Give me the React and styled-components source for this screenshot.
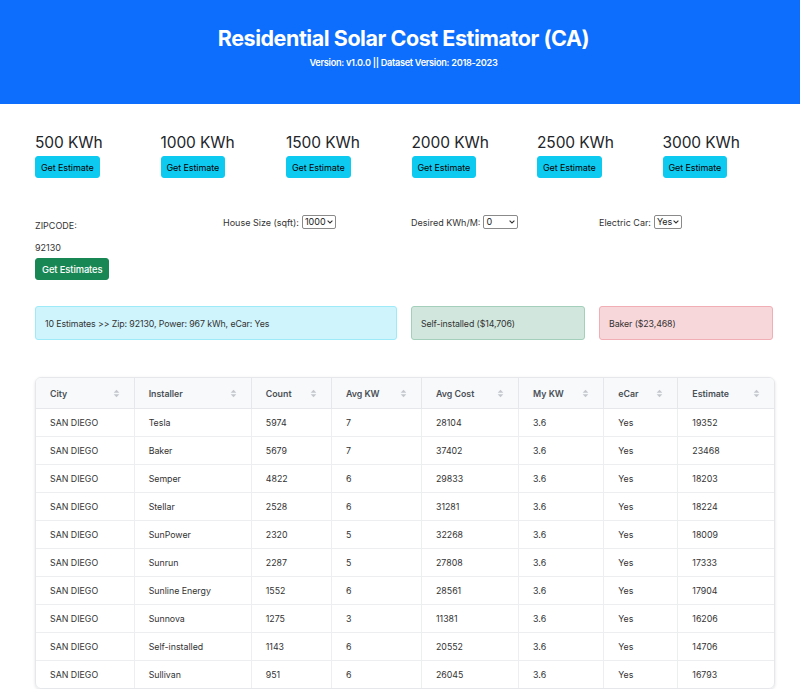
import React from 'react';
import styled, { createGlobalStyle } from 'styled-components';

const kwhOptions = [500, 1000, 1500, 2000, 2500, 3000];

const columns = [
    { key: 'city', label: 'City', width: 98 },
    { key: 'installer', label: 'Installer', width: 117 },
    { key: 'count', label: 'Count', width: 80 },
    { key: 'avgKw', label: 'Avg KW', width: 90 },
    { key: 'avgCost', label: 'Avg Cost', width: 97 },
    { key: 'myKw', label: 'My KW', width: 85 },
    { key: 'ecar', label: 'eCar', width: 74 },
    { key: 'estimate', label: 'Estimate', width: 96 },
];

const rows = [
    ['Tesla', 5974, 7, 28104, 19352],
    ['Baker', 5679, 7, 37402, 23468],
    ['Semper', 4822, 6, 29833, 18203],
    ['Stellar', 2528, 6, 31281, 18224],
    ['SunPower', 2320, 5, 32268, 18009],
    ['Sunrun', 2287, 5, 27808, 17333],
    ['Sunline Energy', 1552, 6, 28561, 17904],
    ['Sunnova', 1275, 3, 11381, 16206],
    ['Self-installed', 1143, 6, 20552, 14706],
    ['Sullivan', 951, 6, 26045, 16793],
].map(([installer, count, avgKw, avgCost, estimate]) => ({
    city: 'SAN DIEGO',
    installer,
    count,
    avgKw,
    avgCost,
    myKw: '3.6',
    ecar: 'Yes',
    estimate,
}));

const SortIcon = () => (
    <svg width="7" height="9" viewBox="0 0 7 9">
        <path d="M3.5 0.8 L6.3 3.8 H0.7 Z" fill="#c3c7cc" />
        <path d="M3.5 8.2 L6.3 5.2 H0.7 Z" fill="#c3c7cc" />
    </svg>
);

const Chevron = () => (
    <svg width="6" height="4" viewBox="0 0 6 4">
        <path d="M0.6 0.6 L3 3 L5.4 0.6" fill="none" stroke="#333" strokeWidth="1.1" />
    </svg>
);

function Dropdown({ value, width }) {
    return (
        <SelectWrap style={{ width }}>
            <Select defaultValue={value}>
                <option>{value}</option>
            </Select>
            <ChevronSpot>
                <Chevron />
            </ChevronSpot>
        </SelectWrap>
    );
}

export default function App() {
    return (
        <>
            <GlobalStyle />
            <Header>
                <Title>Residential Solar Cost Estimator (CA)</Title>
                <Subtitle>Version: v1.0.0 || Dataset Version: 2018-2023</Subtitle>
            </Header>
            <Main>
                <PresetRow>
                    {kwhOptions.map((kwh) => (
                        <Preset key={kwh}>
                            <PresetTitle>{kwh} KWh</PresetTitle>
                            <Button variant="info">Get Estimate</Button>
                        </Preset>
                    ))}
                </PresetRow>

                <FormRow>
                    <Field>
                        <ZipLabel>ZIPCODE:</ZipLabel>
                        <ZipValue>92130</ZipValue>
                        <Button variant="success">Get Estimates</Button>
                    </Field>
                    <Field>
                        <InlineLabel>
                            House Size (sqft):
                            <Dropdown value="1000" width={34} />
                        </InlineLabel>
                    </Field>
                    <Field>
                        <InlineLabel>
                            Desired KWh/M:
                            <Dropdown value="0" width={35} />
                        </InlineLabel>
                    </Field>
                    <Field>
                        <InlineLabel>
                            Electric Car:
                            <Dropdown value="Yes" width={28} />
                        </InlineLabel>
                    </Field>
                </FormRow>

                <AlertRow>
                    <Alert variant="info">10 Estimates &gt;&gt; Zip: 92130, Power: 967 kWh, eCar: Yes</Alert>
                    <Alert variant="success">Self-installed ($14,706)</Alert>
                    <Alert variant="danger">Baker ($23,468)</Alert>
                </AlertRow>

                <TableCard>
                    <Table>
                        <colgroup>
                            {columns.map((c) => (
                                <col key={c.key} style={{ width: c.width }} />
                            ))}
                        </colgroup>
                        <thead>
                            <tr>
                                {columns.map((c) => (
                                    <Th key={c.key}>
                                        <ThInner>
                                            {c.label}
                                            <SortIcon />
                                        </ThInner>
                                    </Th>
                                ))}
                            </tr>
                        </thead>
                        <tbody>
                            {rows.map((row, i) => (
                                <tr key={i}>
                                    {columns.map((c) => (
                                        <Td key={c.key}>{row[c.key]}</Td>
                                    ))}
                                </tr>
                            ))}
                        </tbody>
                    </Table>
                </TableCard>
            </Main>
        </>
    );
}

const GlobalStyle = createGlobalStyle`
    body {
        margin: 0;
        font-family: Inter, "Noto Sans", "Liberation Sans", sans-serif;
        color: #212529;
        background: #fff;
    }
`;

const Header = styled.header`
    background-color: #0d6efd;
    color: white;
    height: 104px;
    text-align: center;
    padding: 25px 0 0 7px;
    box-sizing: border-box;
`;

const Title = styled.h1`
    margin: 0;
    font-size: 21.5px;
    font-weight: 700;
    letter-spacing: -0.45px;
    line-height: 26px;
`;

const Subtitle = styled.div`
    margin-top: 6px;
    font-size: 9.2px;
    font-weight: 600;
    letter-spacing: -0.3px;
`;

const Main = styled.main`
    padding: 28px 27px 0 35px;
`;

const PresetRow = styled.div`
    display: grid;
    grid-template-columns: repeat(6, 125.5px);
`;

const Preset = styled.div`
    display: flex;
    flex-direction: column;
    align-items: flex-start;
`;

const PresetTitle = styled.div`
    font-size: 15.5px;
    line-height: 20px;
    margin-top: 1px;
    margin-bottom: 3px;
    letter-spacing: -0.1px;
`;

const Button = styled.button`
    font-family: inherit;
    font-size: ${(props) => (props.variant === 'success' ? '9.4px' : '9px')};
    height: 22px;
    padding: 0 ${(props) => (props.variant === 'success' ? '6px' : '5px')};
    border-radius: 3px;
    cursor: pointer;
    letter-spacing: -0.1px;
    border: 1px solid ${(props) => (props.variant === 'success' ? '#198754' : '#0dcaf0')};
    background-color: ${(props) => (props.variant === 'success' ? '#198754' : '#0dcaf0')};
    color: ${(props) => (props.variant === 'success' ? 'white' : '#000')};
    font-weight: ${(props) => (props.variant === 'success' ? 500 : 400)};
`;

const FormRow = styled.div`
    display: grid;
    grid-template-columns: repeat(4, 188px);
    margin-top: 37px;
    font-size: 9px;
    color: #333;
`;

const Field = styled.div`
    display: flex;
    flex-direction: column;
    align-items: flex-start;
`;

const ZipLabel = styled.div`
    margin-top: 5px;
    line-height: 12px;
`;

const ZipValue = styled.div`
    margin-top: 10px;
    line-height: 12px;
    margin-bottom: 4px;
`;

const InlineLabel = styled.label`
    display: flex;
    align-items: center;
    gap: 3px;
`;

const SelectWrap = styled.span`
    position: relative;
    display: inline-flex;
    height: 14px;
`;

const Select = styled.select`
    appearance: none;
    width: 100%;
    font-family: inherit;
    font-size: 9px;
    height: 14px;
    line-height: 12px;
    padding: 0 0 0 2px;
    border: 1px solid #8a8a8a;
    border-radius: 2px;
    background: white;
    color: #222;
`;

const ChevronSpot = styled.span`
    position: absolute;
    right: 3px;
    top: 5px;
    display: flex;
    pointer-events: none;
`;

const AlertRow = styled.div`
    display: grid;
    grid-template-columns: 376px 188px 188px;
    margin-top: 26px;
`;

const alertColors = {
    info: { bg: '#cff4fc', border: '#9eeaf9' },
    success: { bg: '#d1e7dd', border: '#a3cfbb' },
    danger: { bg: '#f8d7da', border: '#f1aeb5' },
};

const Alert = styled.div`
    width: calc(100% - 14px);
    box-sizing: border-box;
    height: 34px;
    display: flex;
    align-items: center;
    padding: 0 9px;
    font-size: 8.8px;
    letter-spacing: -0.1px;
    border-radius: 3px;
    background-color: ${(props) => alertColors[props.variant].bg};
    border: 1px solid ${(props) => alertColors[props.variant].border};
    color: #333;
`;

const TableCard = styled.div`
    margin-top: 37px;
    width: 738px;
    border: 1px solid #e5e7eb;
    border-radius: 6px;
    box-shadow: 0 1px 3px rgba(0, 0, 0, 0.12);
    overflow: hidden;
`;

const Table = styled.table`
    width: 100%;
    border-collapse: collapse;
    table-layout: fixed;
    font-size: 8.8px;
`;

const Th = styled.th`
    height: 30px;
    padding: 0 14px;
    background-color: #f8f9fa;
    color: #495057;
    font-weight: 600;
    text-align: left;
    border-bottom: 1px solid #e5e7eb;
    border-right: 1px solid #e5e7eb;
    &:last-child {
        border-right: none;
    }
`;

const ThInner = styled.div`
    display: flex;
    align-items: center;
    justify-content: space-between;
`;

const Td = styled.td`
    height: 27px;
    padding: 0 14px;
    color: #333;
    border-bottom: 1px solid #eceef0;
    border-right: 1px solid #eceef0;
    &:last-child {
        border-right: none;
    }
    tr:last-child & {
        border-bottom: none;
    }
`;
